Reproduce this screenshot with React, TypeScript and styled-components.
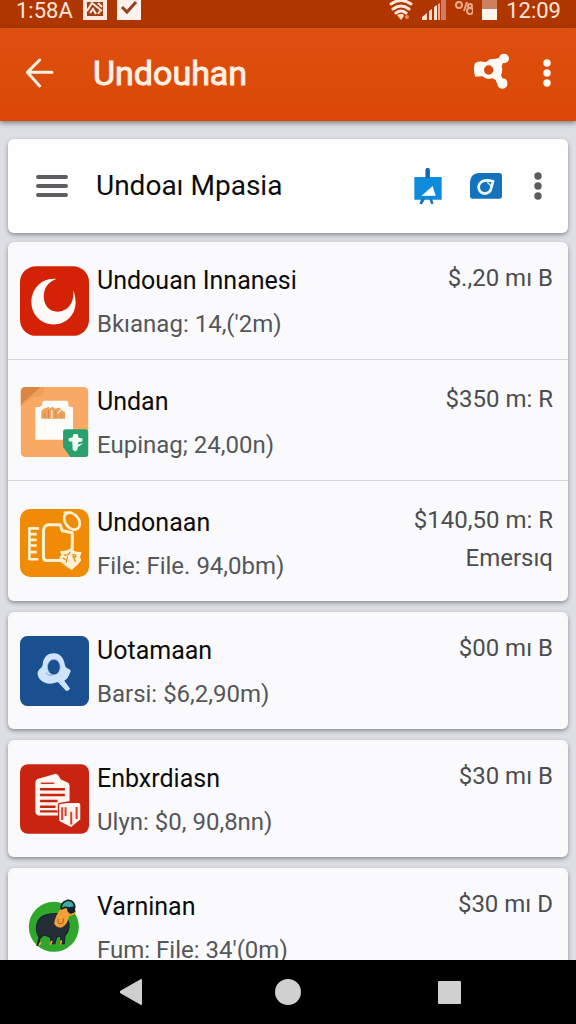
import React from "react";
import styled, { createGlobalStyle } from "styled-components";

const GlobalStyle = createGlobalStyle`
  *, *::before, *::after { box-sizing: border-box; }
  body {
    margin: 0;
    background: #dedfe4;
    font-family: Roboto, "Liberation Sans", sans-serif;
    color: #0c0c0d;
  }
  h1, h2, h3, p, ul { margin: 0; padding: 0; }
  ul { list-style: none; }
`;

const Screen = styled.div`
  display: flex;
  flex-direction: column;
  height: 100vh;
  overflow: hidden;
`;

const StatusBar = styled.div`
  display: flex;
  align-items: flex-start;
  justify-content: space-between;
  flex: none;
  height: 28px;
  padding: 0 15px 0 16px;
  overflow: hidden;
  background: #b03600;
  color: #ffe6d8;
`;

const StatusGroup = styled.div<{ $gap: number }>`
  display: flex;
  align-items: flex-start;
  gap: ${(p) => p.$gap}px;
`;

const Clock = styled.span`
  font-size: 22px;
  line-height: 22px;
`;

const AppBar = styled.header`
  position: relative;
  display: flex;
  align-items: center;
  flex: none;
  height: 93px;
  padding: 0 12px 3px 20px;
  background: linear-gradient(#dc5010, #dc4804);
  box-shadow: 0 2px 5px rgba(40, 44, 60, 0.55);
`;

const AppActions = styled.div`
  display: flex;
  gap: 13px;
`;

const IconButton = styled.button<{ $width: number }>`
  display: flex;
  align-items: center;
  justify-content: center;
  flex: none;
  width: ${(p) => p.$width}px;
  height: 48px;
  padding: 0;
  border: 0;
  background: none;
  cursor: pointer;
`;

const AppTitle = styled.h1`
  flex: 1;
  padding-left: 33px;
  font-size: 34px;
  line-height: 40px;
  font-weight: 400;
  -webkit-text-stroke: 1px #fff0e2;
  color: #fff0e2;
`;

const Content = styled.main`
  display: flex;
  flex-direction: column;
  flex: 1;
  min-height: 0;
  gap: 11px;
  padding: 18px 8px 0;
  overflow: hidden;
`;

const Card = styled.section`
  flex: none;
  border-radius: 6px;
  background: #fafafc;
  box-shadow: 0 2px 4px rgba(60, 62, 75, 0.5);
`;

const Toolbar = styled(Card)`
  display: flex;
  align-items: center;
  height: 94px;
  margin-bottom: -2px;
  padding: 0 7px 0 20px;
  background: #fefefe;
`;

const ToolbarTitle = styled.h2`
  flex: 1;
  padding-left: 20px;
  font-size: 28px;
  line-height: 32px;
  font-weight: 400;
`;

const Row = styled.li`
  display: flex;
  align-items: flex-start;
  gap: 8px;
  padding: 24px 15px 21px 12px;

  & + & {
    padding-top: 27px;
    border-top: 1px solid #d6d7dc;
  }
`;

const AppIcon = styled.svg`
  flex: none;
  width: 69px;
  height: 70px;
`;

const RowText = styled.div`
  display: flex;
  flex-direction: column;
  flex: 1;
  gap: 14px;
  min-width: 0;
  white-space: nowrap;
`;

const RowTitle = styled.h3`
  font-size: 25px;
  line-height: 30px;
  font-weight: 400;
`;

const RowDetail = styled.p`
  font-size: 24px;
  line-height: 28px;
  color: #55565a;
`;

const RowAmount = styled.div`
  display: flex;
  flex-direction: column;
  align-items: flex-end;
  gap: 14px;
  font-size: 24px;
  line-height: 24px;
  color: #4c4d51;
  white-space: nowrap;
`;

const NavBar = styled.nav`
  position: relative;
  display: flex;
  flex: none;
  height: 64px;
  padding: 0 8%;
  background: #000;
`;

const NavButton = styled.button`
  display: flex;
  align-items: center;
  justify-content: center;
  flex: 1;
  padding: 0;
  border: 0;
  background: none;
  cursor: pointer;
`;

const Dots = ({ color, size }: { color: string; size: number }) => (
  <svg width={size} height="30" viewBox={`0 0 ${size} 30`} fill={color}>
    <circle cx={size / 2} cy="5" r="3.7" />
    <circle cx={size / 2} cy="15" r="3.7" />
    <circle cx={size / 2} cy="25" r="3.7" />
  </svg>
);

const MoonIcon = () => (
  <AppIcon viewBox="60 76 206 208" aria-hidden="true">
    <rect x="60" y="76" width="206" height="208" rx="48" fill="#d32205" />
    <path
      fill="#fffaf7"
      d="M168 114C122 110 94 146 94 184c0 38 30 66 66 66 38 0 66-28 66-66 0-14-3-26-7-36 4 38-17 64-47 64-26 0-41-20-41-46 0-26 14-44 37-52Z"
    />
  </AppIcon>
);

const BagIcon = () => (
  <AppIcon viewBox="62 78 204 212" aria-hidden="true">
    <rect x="62" y="78" width="204" height="212" rx="14" fill="#f8aa64" />
    <path fill="#ee9f59" d="M122 78h12l-4 26-30 6-38 26v-6Z" />
    <path fill="#d98544" d="M76 78h46l-60 54V92a14 14 0 0 1 14-14Z" />
    <path fill="#fffdfb" d="M134 120h66q6 0 6 8v6q2 5 14 5v99H106v-99q18 0 20-6 0-13 8-13Z" />
    <path fill="#eda25c" d="M124 174v-24l10-8 14-4v6l10-6 8 6 14-4 4 8 12 6v20Z" />
    <path stroke="#fff0df" strokeWidth="4" fill="none" d="M156 172v-24M182 148l-8 10" />
    <path stroke="#d98544" strokeWidth="3" fill="none" d="M134 170v-12M146 172v-24M168 172v-22M184 170v-12" />
    <path fill="#2aa06f" d="M198 206h60q8 0 8 8v68q0 8-8 8h-46l-22-30v-46q0-8 8-8Z" />
    <path
      fill="#f1fff6"
      d="M222 220h12l3 12 12 2-1 9-12 2-1 7 16-4-16 12-2 8-6 5-8-5-1-24-11-2v-9l12-3Z"
    />
  </AppIcon>
);

const FilesIcon = () => (
  <AppIcon viewBox="60 86 206 203" aria-hidden="true">
    <rect x="60" y="86" width="206" height="203" rx="30" fill="#ef8b06" />
    <g fill="none" stroke="#fff1d2" strokeWidth="8" strokeLinejoin="round">
      <path d="M117 144H88v92h27M90 161h20M90 178h20M90 195h20M90 215h20" />
      <path strokeWidth="9" d="M184 240h-44q-9-1-10-10v-80q2-15 14-17h36l6 18 30 6v50" />
      <ellipse cx="215" cy="122" rx="20" ry="28" transform="rotate(-38 215 122)" />
      <path strokeWidth="5" d="M190 96h24" />
    </g>
    <path fill="#fff1d2" d="m212 203 14 10 18 2-5 14 4 10-10 12-18 17-14-8-18-14-6-14 6-8-3-12 18-2Z" />
    <path fill="none" stroke="#e58c1b" strokeWidth="4" d="m192 224 12-2 6-8m6 8 12 2m-26 4-4 18m20-20 8 18m-38-12 8 6m32-12-8 6" />
  </AppIcon>
);

const SearchIcon = () => (
  <AppIcon viewBox="62 80 204 207" aria-hidden="true">
    <rect x="62" y="80" width="204" height="207" rx="22" fill="#1a4f90" />
    <path
      fill="#cfe3fb"
      d="M162 131c-20 0-32 14-33 34-1 10-15 14-15 25 0 16 16 31 36 31 10 0 18-3 24-5l24 26q8 2 12-7l-17-23c8-4 11-10 14-17l5-10c2-8-15-8-17-18-3-22-14-36-33-36Z"
    />
    <ellipse cx="162" cy="172" rx="19" ry="23" fill="#1a4f90" stroke="#a9c8ee" strokeWidth="2" />
    <path fill="none" stroke="#8fb4e0" strokeWidth="3" d="M138 188q8 10 20 9" />
  </AppIcon>
);

const ReportIcon = () => (
  <AppIcon viewBox="60 70 206 208" aria-hidden="true">
    <rect x="60" y="70" width="206" height="208" rx="24" fill="#c92311" />
    <path fill="#fff5ef" d="m112 114 52-15q6-2 10 4l8 13 20 9q6 3 6 10v55l-32 2v31h-62q-8-2-8-10v-88q0-8 6-11Z" />
    <path
      fill="none"
      stroke="#c92311"
      strokeWidth="7"
      d="M120 145h74M120 162h74M120 180h52M120 197h46M120 211h52"
    />
    <path stroke="#c92311" strokeWidth="4" d="M122 127h40" />
    <path
      fill="#fff5ef"
      stroke="#c92311"
      strokeWidth="4"
      d="m176 188 30-5 30 1q6 1 6 8v44l-29 24-32-16q-6-3-6-8v-42q0-5 1-6Z"
    />
    <path fill="none" stroke="#d2402f" strokeWidth="6" d="M186 199v38M196 199v26M213 212v38M229 198v36" />
  </AppIcon>
);

const AnimalIcon = () => (
  <AppIcon viewBox="62 104 204 207" aria-hidden="true">
    <circle cx="162" cy="207" r="74" fill="#2fa62c" />
    <path
      fill="#252d36"
      stroke="#14202a"
      strokeWidth="3"
      d="M112 262q6-18 6-26-10-14-7-32 4-24 24-31 22-8 50-4 24 12 22 38-2 16-12 26l-2 24h-12l2-22-12 2-6 20h-10l-4-20-18-6-12 10-4 20Z"
    />
    <path fill="#f2a13a" d="M183 152q-18 24-20 46 8 14 24 10 16-8 20-32l16-8-24-24Z" />
    <path fill="none" stroke="#b96a1d" strokeWidth="4" d="M176 184q-4 14 6 14t8-16" />
    <path fill="#41a9a5" stroke="#15242c" strokeWidth="5" d="M184 154q-2-20 18-25 20-2 22 20l-12 6-14-6Z" />
    <path fill="#15202a" d="m202 150 22-4 2 18-12 6q-16-6-12-20Z" />
    <path fill="none" stroke="#f2a13a" strokeWidth="5" d="m210 172 16-6M118 262l6-10m28 8 4-12m26 12 2-14" />
  </AppIcon>
);

type Item = {
  title: string;
  detail: string;
  amounts: string[];
  Icon: () => React.ReactElement;
};

const groups: Item[][] = [
  [
    { title: "Undouan Innanesi", detail: "Bkıanag: 14,('2m)", amounts: ["$.,20 mı B"], Icon: MoonIcon },
    { title: "Undan", detail: "Eupinag; 24,00n)", amounts: ["$350 m: R"], Icon: BagIcon },
    { title: "Undonaan", detail: "File: File. 94,0bm)", amounts: ["$140,50 m: R", "Emersıq"], Icon: FilesIcon },
  ],
  [{ title: "Uotamaan", detail: "Barsi: $6,2,90m)", amounts: ["$00 mı B"], Icon: SearchIcon }],
  [{ title: "Enbxrdiasn", detail: "Ulyn: $0, 90,8nn)", amounts: ["$30 mı B"], Icon: ReportIcon }],
  [{ title: "Varninan", detail: "Fum: File: 34'(0m)", amounts: ["$30 mı D"], Icon: AnimalIcon }],
];

export default function App() {
  return (
    <Screen>
      <GlobalStyle />
      <StatusBar>
        <StatusGroup $gap={10}>
          <Clock>1:58A</Clock>
          <svg width="24" height="21" viewBox="0 0 24 21" aria-hidden="true">
            <path fill="#ffe9de" d="M0 0h24v20H0Z" />
            <path fill="#a33d16" d="M4 2h16v14H4Z" />
            <path fill="none" stroke="#ffe9de" strokeWidth="2" d="m4 11 5-8 10 8M7 13l3-4 3 5m2-11 4 4m-4 7 2-3" />
          </svg>
          <svg width="24" height="21" viewBox="0 0 24 21" aria-hidden="true">
            <path fill="#fff1ec" d="M0 0h24v20H0Z" />
            <path fill="none" stroke="#97401d" strokeWidth="3" d="m5 7 5 5 9-10" />
          </svg>
        </StatusGroup>
        <StatusGroup $gap={9}>
          <svg width="24" height="21" viewBox="0 0 24 21" aria-hidden="true">
            <g fill="none" stroke="#ffe6d8" strokeWidth="3" strokeLinecap="round">
              <path d="M2 4q10-7 20 0M4 9q8-6 16 0M7 13q5-4 10 0" />
            </g>
            <path fill="#ffd9c6" d="m12 20-4-5 3-1h3l1 2Z" />
            <circle cx="18" cy="17" r="2" fill="#e58c62" />
          </svg>
          <svg width="24" height="21" viewBox="0 0 24 21" aria-hidden="true">
            <path fill="#ffdfcf" d="M0 20v-3l5-4v7ZM7 20v-9l3-2v11ZM12 20V7l3-2v15Z" />
            <path fill="#f3ab8c" d="M16 20V4l2-1v17Z" />
            <path fill="#cf7d5e" d="M19 0h5v20h-5Z" />
          </svg>
          <svg width="18" height="16" viewBox="0 0 18 16" aria-hidden="true">
            <g fill="none" stroke="#e9a88b" strokeWidth="2">
              <ellipse cx="4" cy="5" rx="3" ry="3" />
              <path d="m12 2-3 9" />
              <circle cx="15" cy="6" r="2" />
              <circle cx="15" cy="11" r="3" />
            </g>
          </svg>
          <svg width="15" height="21" viewBox="0 0 15 21" aria-hidden="true">
            <path fill="#cb805f" d="M0 0h15v10H0Z" />
            <path fill="#fff4ec" d="M0 9h15v11H0Z" />
          </svg>
          <Clock>12:09</Clock>
        </StatusGroup>
      </StatusBar>

      <AppBar>
        <IconButton type="button" aria-label="Back" $width={40}>
          <svg width="28" height="32" viewBox="80 172 84 96" aria-hidden="true">
            <path
              fill="none"
              stroke="#fff0e2"
              strokeWidth="9"
              strokeLinecap="round"
              strokeLinejoin="round"
              d="M158 218H85M121 181l-37 37 37 41"
            />
          </svg>
        </IconButton>
        <AppTitle>Undouhan</AppTitle>
        <AppActions>
          <IconButton type="button" aria-label="Share" $width={52}>
            <svg width="36" height="40" viewBox="556 159 108 120" aria-hidden="true">
              <path
                fill="#fffaf5"
                d="M562 189q10-5 22-4l12 1 10-8 18-2 10-2a15 14 0 1 1 12 15l-4 10q4 15-2 27l4 9q16 1 15 15a15 15 0 0 1-30 3l-5-13q-9-4-10-5-20 6-29-6l-22 1q-8-20-1-41Z"
              />
              <circle cx="603" cy="210" r="14" fill="#d84a08" />
            </svg>
          </IconButton>
          <IconButton type="button" aria-label="More options" $width={34}>
            <Dots color="#fffaf5" size={12} />
          </IconButton>
        </AppActions>
      </AppBar>

      <Content>
        <Toolbar>
          <IconButton type="button" aria-label="Menu" $width={48}>
            <svg width="32" height="24" viewBox="0 0 32 24" aria-hidden="true">
              <path stroke="#5d5e62" strokeWidth="4" strokeLinecap="round" d="M2 3h28M2 12h28M2 21h28" />
            </svg>
          </IconButton>
          <ToolbarTitle>Undoaı Mpasia</ToolbarTitle>
          <IconButton type="button" aria-label="Present" $width={58}>
            <svg width="28" height="37" viewBox="112 109 84 111" aria-hidden="true">
              <path fill="#0f8bde" d="M147 112q6-6 12 0v24h36v68H113v-68h34Z" />
              <path fill="#1467a8" d="M147 112q6-6 12 0v26h-12Z" />
              <path fill="#f6fcff" d="m134 193 34-30 9 29Z" />
              <path fill="#1976b9" d="m134 201-6 15 8 2 10-17Zm24 0 5 16 8-1-5-15Z" />
            </svg>
          </IconButton>
          <IconButton type="button" aria-label="Camera" $width={58}>
            <svg width="32" height="26" viewBox="281 123 96 78" aria-hidden="true">
              <path fill="#1572bd" d="M307 123h62q8 0 8 8v61q0 8-8 8h-80q-8 0-8-8v-42q2-26 26-27Z" />
              <path fill="none" stroke="#eef8ff" strokeWidth="8" d="M350 148q-18-6-32 0-12 7-11 20 3 15 18 17 18-2 20-18l5-19Z" />
              <path stroke="#eef8ff" strokeWidth="4" d="m333 151 12 12" />
            </svg>
          </IconButton>
          <IconButton type="button" aria-label="More" $width={46}>
            <Dots color="#5c5c5f" size={12} />
          </IconButton>
        </Toolbar>

        {groups.map((items) => (
          <Card key={items[0].title}>
            <ul>
              {items.map(({ title, detail, amounts, Icon }) => (
                <Row key={title}>
                  <Icon />
                  <RowText>
                    <RowTitle>{title}</RowTitle>
                    <RowDetail>{detail}</RowDetail>
                  </RowText>
                  <RowAmount>
                    {amounts.map((amount) => (
                      <span key={amount}>{amount}</span>
                    ))}
                  </RowAmount>
                </Row>
              ))}
            </ul>
          </Card>
        ))}
      </Content>

      <NavBar>
        <NavButton type="button" aria-label="Back">
          <svg width="30" height="26" viewBox="-8 0 30 26" aria-hidden="true">
            <path fill="#cfcfcf" d="M21 0q1 0 1 1v24q0 1-1 1L0 14v-2Z" />
          </svg>
        </NavButton>
        <NavButton type="button" aria-label="Home">
          <svg width="26" height="26" viewBox="0 0 26 26" aria-hidden="true">
            <circle cx="13" cy="13" r="13" fill="#d0d0d0" />
          </svg>
        </NavButton>
        <NavButton type="button" aria-label="Recent apps">
          <svg width="23" height="23" viewBox="0 0 23 23" aria-hidden="true">
            <rect width="23" height="23" rx="1" fill="#d0d0d0" />
          </svg>
        </NavButton>
      </NavBar>
    </Screen>
  );
}
